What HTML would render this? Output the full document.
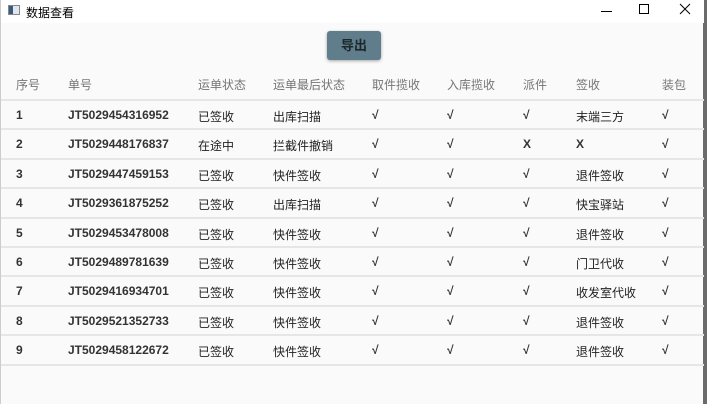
<!DOCTYPE html>
<html><head><meta charset="utf-8"><style>
*{margin:0;padding:0;box-sizing:border-box}
body{width:707px;height:404px;overflow:hidden;background:#6b6b6b;font-family:"Liberation Sans","Noto Sans CJK SC",sans-serif;position:relative}
#win{position:absolute;left:0;top:0;width:703px;height:404px;background:#fafafa;border-left:1px solid #ccc}
#title{position:absolute;left:0;top:0;width:703px;height:23px;background:#fff;font-size:12px;color:#000}
.t{position:absolute;font-size:12px;white-space:nowrap}
#btn{position:absolute;left:326px;top:31px;width:54px;height:29px;background:#607d8b;border-radius:3px;box-shadow:0 1px 3px rgba(0,0,0,.35);font-size:13px;font-weight:bold;color:#1c262b;text-align:center;line-height:29px}
.h{color:#757575;top:76px}
.line{position:absolute;left:0;width:703px;height:2px;background:#e6e6e6}
.d{font-weight:bold;color:#333}
</style></head><body><div id="win">
<div id="title">
<div style="position:absolute;left:7px;top:5px;width:12px;height:10px;border:1px solid #888;background:#dfe6ee"><div style="width:4px;height:8px;background:#3a5a80"></div></div>
<div class="t" style="left:25px;top:4px;color:#000">数据查看</div>
<div style="position:absolute;left:600px;top:11px;width:11px;height:1px;background:#000"></div>
<div style="position:absolute;left:638px;top:4px;width:10px;height:10px;border:1px solid #000"></div>
<svg style="position:absolute;left:678px;top:3px" width="12" height="12"><path d="M1 1L11 11M11 1L1 11" stroke="#000" stroke-width="1"/></svg>
</div>
<div id="btn">导出</div>
<div class="t h" style="left:15px">序号</div><div class="t h" style="left:67px">单号</div><div class="t h" style="left:197px">运单状态</div><div class="t h" style="left:272px">运单最后状态</div><div class="t h" style="left:371px">取件揽收</div><div class="t h" style="left:446px">入库揽收</div><div class="t h" style="left:522px">派件</div><div class="t h" style="left:575px">签收</div><div class="t h" style="left:661px">装包</div>
<div id="rows"></div>
</div>
<script>
var d=[["1","JT5029454316952","已签收","出库扫描","√","√","√","末端三方","√"],
["2","JT5029448176837","在途中","拦截件撤销","√","√","X","X","√"],
["3","JT5029447459153","已签收","快件签收","√","√","√","退件签收","√"],
["4","JT5029361875252","已签收","出库扫描","√","√","√","快宝驿站","√"],
["5","JT5029453478008","已签收","快件签收","√","√","√","退件签收","√"],
["6","JT5029489781639","已签收","快件签收","√","√","√","门卫代收","√"],
["7","JT5029416934701","已签收","快件签收","√","√","√","收发室代收","√"],
["8","JT5029521352733","已签收","快件签收","√","√","√","退件签收","√"],
["9","JT5029458122672","已签收","快件签收","√","√","√","退件签收","√"]];
var xs=[15,67,197,272,371,446,522,575,661],h="";
for(var i=0;i<=9;i++)h+='<div class="line" style="top:'+(99+i*29.4)+'px"></div>';
d.forEach(function(r,i){var y=108+i*29.4;r.forEach(function(c,j){var s=((j==2||j==3||j==7)&&c!="X")?'font-weight:normal;color:#222':'';h+='<div class="t d" style="left:'+xs[j]+'px;top:'+y+'px;'+s+'">'+c+'</div>';});});
document.getElementById('rows').innerHTML=h;
</script>
</body></html>
